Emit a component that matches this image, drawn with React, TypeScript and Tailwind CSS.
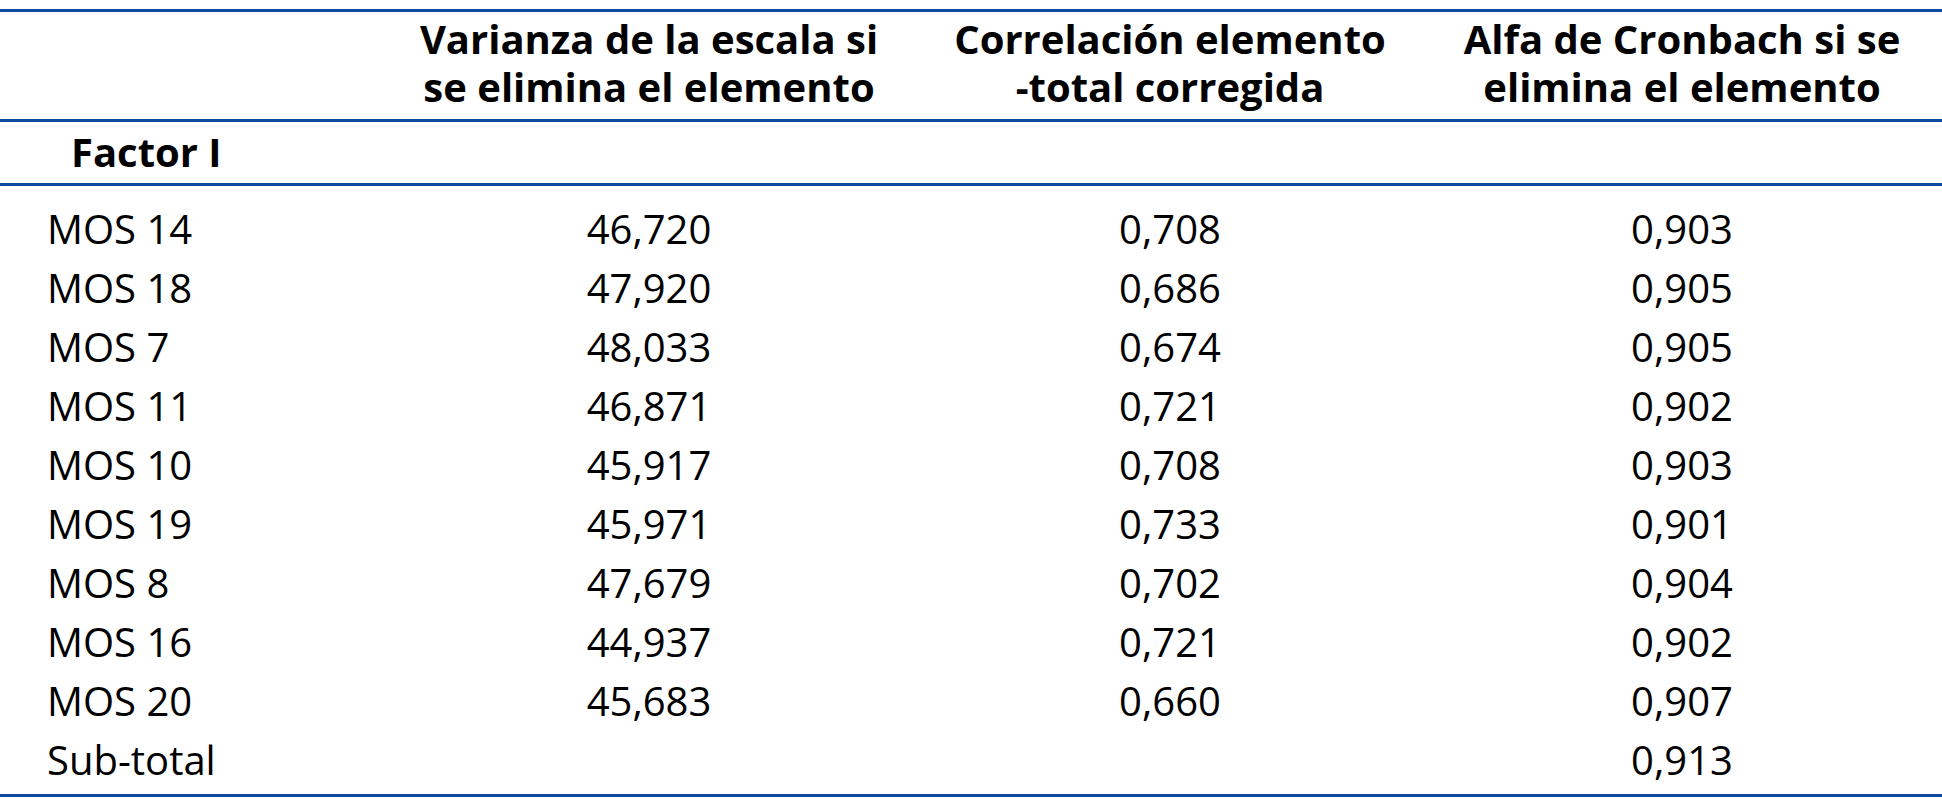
import React from 'react';

const rows: [string, string, string, string][] = [
  ['MOS 14', '46,720', '0,708', '0,903'],
  ['MOS 18', '47,920', '0,686', '0,905'],
  ['MOS 7', '48,033', '0,674', '0,905'],
  ['MOS 11', '46,871', '0,721', '0,902'],
  ['MOS 10', '45,917', '0,708', '0,903'],
  ['MOS 19', '45,971', '0,733', '0,901'],
  ['MOS 8', '47,679', '0,702', '0,904'],
  ['MOS 16', '44,937', '0,721', '0,902'],
  ['MOS 20', '45,683', '0,660', '0,907'],
  ['Sub-total', '', '', '0,913'],
];

const cols = 'grid grid-cols-[390px_518px_524px_500px]';

const App: React.FC = () => {
  return (
    <div className="bg-white w-[1942px] h-[800px] pt-[9px] text-black font-['Open_Sans',sans-serif]">
      {/* Header */}
      <div className={`${cols} border-y-[3px] border-[#0d4a9f] pt-[3px] pb-[8px] text-[40px] leading-[48px] font-bold`}>
        <div></div>
        <div className="text-center">
          <div>Varianza de la escala si</div>
          <div>se elimina el elemento</div>
        </div>
        <div className="text-center">
          <div>Correlación elemento</div>
          <div>-total corregida</div>
        </div>
        <div className="text-center">
          <div>Alfa de Cronbach si se</div>
          <div>elimina el elemento</div>
        </div>
      </div>

      {/* Factor */}
      <div className="border-b-[3px] border-[#0d4a9f] pt-[6px] pb-[7px] pl-[71px] text-[40px] leading-[48px] font-bold">
        Factor I
      </div>

      {/* Body */}
      <div className="border-b-[3px] border-[#0d4a9f] pt-[13px] pb-[5px] text-[40px] leading-[59px]">
        {rows.map((r) => (
          <div key={r[0]} className={`${cols} h-[59px]`}>
            <div className="pl-[47px]">{r[0]}</div>
            <div className="text-center">{r[1]}</div>
            <div className="text-center">{r[2]}</div>
            <div className="text-center">{r[3]}</div>
          </div>
        ))}
      </div>
    </div>
  );
};

export default App;
